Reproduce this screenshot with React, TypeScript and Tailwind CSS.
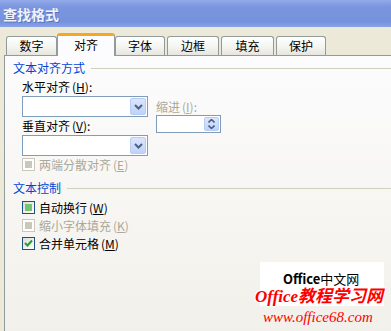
import React from "react";

const font = { fontFamily: '"Noto Sans CJK SC", "Noto Sans", sans-serif' };

const tabs = [
  { label: "数字", w: "w-[51px]", ml: "ml-0" },
  { label: "对齐", w: "w-[58px]", ml: "ml-0", active: true },
  { label: "字体", w: "w-[50px]", ml: "ml-0" },
  { label: "边框", w: "w-[52px]", ml: "ml-[2px]" },
  { label: "填充", w: "w-[53px]", ml: "ml-[2px]" },
  { label: "保护", w: "w-[50px]", ml: "ml-[2px]" },
];

function Chevron() {
  return (
    <svg width="9" height="6" viewBox="0 0 9 6">
      <path d="M1 1 L4.5 4.5 L8 1" fill="none" stroke="#4d6185" strokeWidth="2" />
    </svg>
  );
}

function Combo() {
  return (
    <div className="flex h-[21px] w-[126px] items-stretch border border-[#7f9db9] bg-white p-[1px]">
      <div className="flex-1" />
      <div className="flex w-[16px] items-center justify-center rounded-[2px] border border-[#b9ccf6] bg-[linear-gradient(180deg,#dbe6fd_0%,#c0d2fa_100%)]">
        <Chevron />
      </div>
    </div>
  );
}

function Spin() {
  return (
    <div className="flex h-[18px] w-[65px] items-stretch border border-[#7f9db9] bg-white p-[1px]">
      <div className="flex-1" />
      <div className="flex w-[15px] flex-col items-center justify-center gap-[2px] rounded-[2px] border border-[#b9ccf6] bg-[linear-gradient(180deg,#dbe6fd_0%,#c0d2fa_100%)]">
        <svg width="7" height="4" viewBox="0 0 7 4">
          <path d="M0.5 3.5 L3.5 0.5 L6.5 3.5" fill="none" stroke="#4d6185" strokeWidth="1.6" />
        </svg>
        <svg width="7" height="4" viewBox="0 0 7 4">
          <path d="M0.5 0.5 L3.5 3.5 L6.5 0.5" fill="none" stroke="#4d6185" strokeWidth="1.6" />
        </svg>
      </div>
    </div>
  );
}

function Check({ kind, label, key1 }: { kind: "disabled" | "mixed" | "checked"; label: string; key1: string }) {
  const disabled = kind === "disabled";
  return (
    <div className="flex h-[17px] items-center gap-[4px]">
      <div
        className={`flex h-[13px] w-[13px] items-center justify-center border ${
          disabled ? "border-[#cac8bb] bg-white" : "border-[#1c5180] bg-[linear-gradient(135deg,#dcdcd7_0%,#ffffff_100%)]"
        }`}
      >
        {disabled && <div className="h-[7px] w-[7px] bg-[#cac8bb]" />}
        {kind === "mixed" && <div className="h-[7px] w-[7px] bg-[#73c473]" />}
        {kind === "checked" && (
          <svg width="9" height="9" viewBox="0 0 9 9">
            <path d="M1 4 L3.5 6.5 L8 1.5" fill="none" stroke="#21a121" strokeWidth="2" />
          </svg>
        )}
      </div>
      <span className={`text-[12px] leading-[14px] ${disabled ? "text-[#aca899]" : "text-black"}`}>
        {label}
        <span className="ml-[2px]">
          (<u>{key1}</u>)
        </span>
      </span>
    </div>
  );
}

function Heading({ text }: { text: string }) {
  return (
    <div className="flex items-center">
      <span className="text-[12px] leading-[14px] text-[#0046d5]">{text}</span>
      <div className="ml-[6px] h-[1px] flex-1 bg-[#d0d0bf]" />
    </div>
  );
}

export default function App() {
  return (
    <div style={font} className="relative flex h-[331px] w-[391px] flex-col overflow-hidden bg-[#ece9d8]">
      <div className="flex h-[27px] items-center bg-[linear-gradient(180deg,#92aaea_0%,#7b96de_25%,#7692dc_80%,#88a2e6_100%)] pl-[3px]">
        <span className="text-[14px] font-bold leading-[16px] text-[#eef2fb] [text-shadow:1px_1px_0_#5a76c2]">查找格式</span>
      </div>

      <div className="flex h-[28px] items-end pl-[6px]">
        {tabs.map((t) =>
          t.active ? (
            <div
              key={t.label}
              className={`relative z-10 -mb-[1px] flex h-[23px] ${t.w} items-start justify-center rounded-t-[3px] border-x border-t-[3px] border-x-[#919b9c] border-t-[#f5a623] bg-[#fcfcfe] pt-[2px] text-[12px] leading-[14px] text-black`}
            >
              {t.label}
            </div>
          ) : (
            <div
              key={t.label}
              className={`flex h-[19px] ${t.w} ${t.ml} items-center justify-center rounded-t-[3px] border-x border-t border-[#919b9c] bg-[linear-gradient(180deg,#ffffff_0%,#f3f3ef_60%,#e6e5de_100%)] text-[12px] leading-[14px] text-black`}
            >
              {t.label}
            </div>
          ),
        )}
      </div>

      <div className="ml-[4px] flex flex-1 flex-col border-l border-t border-[#919b9c] bg-[linear-gradient(180deg,#fcfcfe_0%,#f6f5f1_60%,#f2f0ea_100%)] pl-[8px] pt-[5px]">
        <Heading text="文本对齐方式" />
        <div className="flex pl-[9px] pt-[5px]">
          <div className="flex flex-col">
            <span className="text-[12px] leading-[14px] text-black">
              水平对齐<span className="ml-[2px]">(<u>H</u>):</span>
            </span>
            <div className="mt-[2px]">
              <Combo />
            </div>
            <span className="mt-[2px] text-[12px] leading-[14px] text-black">
              垂直对齐<span className="ml-[2px]">(<u>V</u>):</span>
            </span>
            <div className="mt-[2px]">
              <Combo />
            </div>
            <div>
              <Check kind="disabled" label="两端分散对齐" key1="E" />
            </div>
          </div>
          <div className="ml-[8px] flex flex-col pt-[20px]">
            <span className="text-[12px] leading-[14px] text-[#aca899]">
              缩进<span className="ml-[2px]">(<u>I</u>):</span>
            </span>
            <div className="mt-[1px]">
              <Spin />
            </div>
          </div>
        </div>

        <div className="mt-[8px]">
          <Heading text="文本控制" />
        </div>
        <div className="flex flex-col gap-[1px] pl-[9px] pt-[4px]">
          <Check kind="mixed" label="自动换行" key1="W" />
          <Check kind="disabled" label="缩小字体填充" key1="K" />
          <Check kind="checked" label="合并单元格" key1="M" />
        </div>
      </div>

      <div className="absolute left-[260px] top-[262px] h-[44px] w-[124px] bg-white">
        <div className="pl-[23px] pt-[9px] text-[13px] font-bold leading-[16px] text-black">
          Office<span className="font-normal">中文网</span>
        </div>
      </div>
      <div
        className="absolute left-[255px] top-[287px] text-[17px] font-bold italic leading-[20px] text-[#ff0000] [text-shadow:1px_1px_0_#fff,-1px_-1px_0_#fff,1px_-1px_0_#fff,-1px_1px_0_#fff]"
        style={{ fontFamily: '"Liberation Serif", "Noto Sans CJK SC", serif' }}
      >
        Office教程学习网
      </div>
      <div
        className="absolute left-[263px] top-[308px] text-[15px] italic leading-[18px] text-[#ff0000]"
        style={{ fontFamily: '"Liberation Serif", serif' }}
      >
        www.office68.com
      </div>
    </div>
  );
}
